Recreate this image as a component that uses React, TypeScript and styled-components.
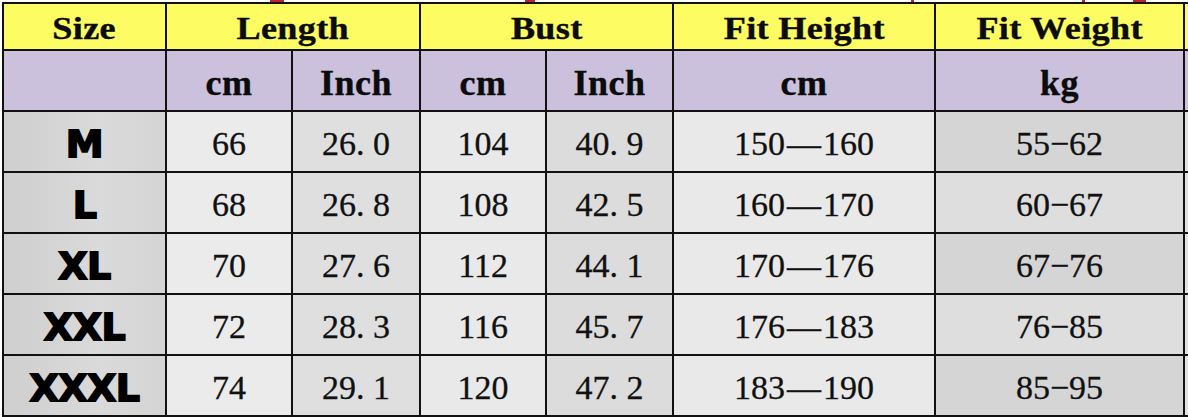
import styled, { createGlobalStyle } from "styled-components";

const GlobalStyle = createGlobalStyle`
  html, body {
    margin: 0;
    padding: 0;
    background: #ffffff;
    overflow: hidden;
  }
`;

const rows = [
  { size: "M", lenCm: "66", lenIn: "26. 0", bustCm: "104", bustIn: "40. 9", height: "150—160", weight: "55−62" },
  { size: "L", lenCm: "68", lenIn: "26. 8", bustCm: "108", bustIn: "42. 5", height: "160—170", weight: "60−67" },
  { size: "XL", lenCm: "70", lenIn: "27. 6", bustCm: "112", bustIn: "44. 1", height: "170—176", weight: "67−76" },
  { size: "XXL", lenCm: "72", lenIn: "28. 3", bustCm: "116", bustIn: "45. 7", height: "176—183", weight: "76−85" },
  { size: "XXXL", lenCm: "74", lenIn: "29. 1", bustCm: "120", bustIn: "47. 2", height: "183—190", weight: "85−95" },
];

const colWidths = [163, 126, 128, 126, 127, 262, 249, 40];

// per-column cell shade (size, length cm, length inch, bust cm, bust inch, height, weight, cut-off)
const shades = ["#d6d6d6", "#ebebeb", "#dfdfdf", "#e9e9e9", "#dcdcdc", "#e9e9e9", "#d5d5d5", "#e2e2e2"];

const Page = styled.div`
  position: relative;
  padding: 2px 0 0 2px;
  width: 1300px;
`;

const Scribble = styled.svg`
  position: absolute;
  top: 0;
  left: 0;
`;

const Table = styled.table`
  border-collapse: collapse;
  table-layout: fixed;
  width: ${colWidths.reduce((a, b) => a + b, 0)}px;
`;

const TopRow = styled.tr`
  height: 47px;
`;

const SubRow = styled.tr`
  height: 61px;
`;

const BodyRow = styled.tr`
  height: 61px;
`;

const HeadCell = styled.th<{ $tone: "yellow" | "purple" }>`
  border: 2px solid #111;
  padding: 0;
  text-align: center;
  vertical-align: middle;
  background: ${(p) => (p.$tone === "yellow" ? "#fdfd63" : "#cbc1dc")};
  font-family: "Liberation Serif", "Times New Roman", serif;
  font-weight: 700;
  color: #0c0c0c;
  font-size: ${(p) => (p.$tone === "yellow" ? "32px" : "36px")};
  letter-spacing: ${(p) => (p.$tone === "yellow" ? "0.3px" : "0.5px")};
  line-height: 1;
  padding-top: ${(p) => (p.$tone === "yellow" ? "2px" : "4px")};
  -webkit-text-stroke: 0.4px #0c0c0c;
`;

const Wide = styled.span`
  display: inline-block;
  transform: scaleX(1.13);
`;

const SizeCell = styled.td`
  border: 2px solid #111;
  padding: 5px 0 0;
  text-align: center;
  vertical-align: middle;
  background: linear-gradient(90deg, #cfcfcf, #dadada 60%, #d4d4d4);
  font-family: "DejaVu Sans", "Liberation Sans", sans-serif;
  font-weight: 700;
  font-size: 38px;
  letter-spacing: -0.5px;
  -webkit-text-stroke: 1.8px #000;
  color: #000;
  line-height: 1;
`;

const Cell = styled.td<{ $shade: string }>`
  border: 2px solid #111;
  padding: 4px 0 0;
  text-align: center;
  vertical-align: middle;
  background: ${(p) => p.$shade};
  font-family: "Liberation Serif", "Times New Roman", serif;
  font-size: 34px;
  color: #111;
  -webkit-text-stroke: 0.3px #111;
  line-height: 1;
  white-space: nowrap;
`;

const Dash = styled.span`
  margin: 0 2px;
`;

function splitDash(v: string) {
  const [a, b] = v.split("—");
  return (
    <>
      {a}
      <Dash>—</Dash>
      {b}
    </>
  );
}

export default function App() {
  return (
    <>
      <GlobalStyle />
      <Page>
        <Table>
          <colgroup>
            {colWidths.map((w, i) => (
              <col key={i} style={{ width: w }} />
            ))}
          </colgroup>
          <thead>
            <TopRow>
              <HeadCell $tone="yellow"><Wide>Size</Wide></HeadCell>
              <HeadCell $tone="yellow" colSpan={2}><Wide>Length</Wide></HeadCell>
              <HeadCell $tone="yellow" colSpan={2}><Wide>Bust</Wide></HeadCell>
              <HeadCell $tone="yellow"><Wide>Fit Height</Wide></HeadCell>
              <HeadCell $tone="yellow"><Wide>Fit Weight</Wide></HeadCell>
              <HeadCell $tone="yellow" />
            </TopRow>
            <SubRow>
              <HeadCell $tone="purple" />
              <HeadCell $tone="purple">cm</HeadCell>
              <HeadCell $tone="purple">Inch</HeadCell>
              <HeadCell $tone="purple">cm</HeadCell>
              <HeadCell $tone="purple">Inch</HeadCell>
              <HeadCell $tone="purple">cm</HeadCell>
              <HeadCell $tone="purple">kg</HeadCell>
              <HeadCell $tone="purple" />
            </SubRow>
          </thead>
          <tbody>
            {rows.map((r, i) => (
              <BodyRow key={r.size}>
                <SizeCell>{r.size}</SizeCell>
                <Cell $shade={shades[1]}>{r.lenCm}</Cell>
                <Cell $shade={shades[2]}>{r.lenIn}</Cell>
                <Cell $shade={shades[3]}>{r.bustCm}</Cell>
                <Cell $shade={shades[4]}>{r.bustIn}</Cell>
                <Cell $shade={shades[5]}>{splitDash(r.height)}</Cell>
                <Cell $shade={i % 2 ? "#dedede" : shades[6]}>{r.weight}</Cell>
                <Cell $shade={shades[7]} />
              </BodyRow>
            ))}
          </tbody>
        </Table>
        {/* red fragments of the cut-off caption above the table */}
        <Scribble width="1188" height="3" viewBox="0 0 1188 3">
          <g fill="#b8282a">
            <rect x="270" y="0" width="14" height="2" />
            <rect x="525" y="0" width="10" height="2" />
            <rect x="911" y="0" width="3" height="2" />
            <rect x="1082" y="0" width="3" height="2" />
            <rect x="1133" y="0" width="13" height="2" />
          </g>
        </Scribble>
      </Page>
    </>
  );
}
